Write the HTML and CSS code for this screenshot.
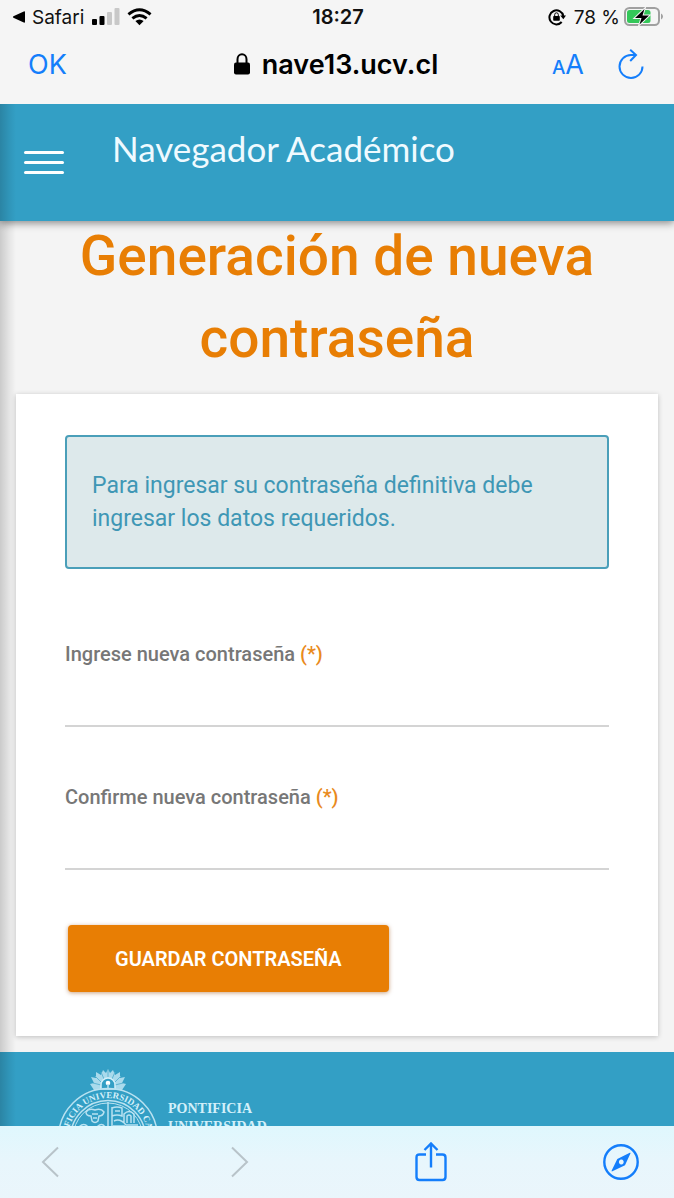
FILE: index.html
```html
<!DOCTYPE html>
<html lang="es">
<head>
<meta charset="utf-8">
<meta name="viewport" content="width=device-width, initial-scale=1">
<title>Navegador Académico</title>
<link rel="stylesheet" href="styles.css">
</head>
<body>
<div class="status">
  <div class="status-left">
    <svg class="back-icon" viewBox="0 0 14 14" aria-hidden="true"><path d="M13 2.200v9.600q0 1.200-1.200.7L1.400 7.700q-1-.7 0-1.400L11.800 1.500Q13 1 13 2.200z"/></svg>
    <span class="back-app">Safari</span>
    <svg class="signal-icon" viewBox="0 0 28 18" aria-hidden="true"><rect x="0" y="11" width="5" height="6" rx="1"/><rect x="7.500" y="8" width="5" height="9" rx="1"/><rect class="off" x="15" y="4" width="5" height="13" rx="1"/><rect class="off" x="22.500" y="0" width="5" height="17" rx="1"/></svg>
    <svg class="wifi-icon" viewBox="0 0 26 18" aria-hidden="true"><path class="arc" d="M1.500 6.300Q13-3.300 24.500 6.300M5.600 10.500Q13 4.300 20.400 10.500"/><path d="M8.700 13.200Q13 9.800 17.300 13.200L13 17.500z"/></svg>
  </div>
  <div class="clock">18:27</div>
  <div class="status-right">
    <svg class="rotation-icon" viewBox="0 0 18 18" aria-hidden="true"><path class="ring" d="M13.700 14A7 7 0 1 1 15.300 8"/><path d="M12.300 7.500h5.700l-2.700 3.800z"/><rect x="5.200" y="8" width="6.600" height="4.800" rx=".8"/><path class="shackle" d="M6.700 8V6.600a1.800 1.800 0 0 1 3.600 0V8"/></svg>
    <span class="percent">78 %</span>
    <svg class="battery-icon" viewBox="0 0 40 20" aria-hidden="true"><rect class="case" x="1" y="1" width="34" height="17" rx="4.500"/><path class="cap" d="M37 6.500q2 .8 2 3t-2 3z"/><rect class="charge" x="3" y="3" width="23.500" height="13" rx="2.500"/><path class="bolt" d="M20.500 2L11 11h6.500L15.500 17.500l9.500-9h-6.500z"/></svg>
  </div>
</div>
<nav class="browser-bar">
  <button class="ok" type="button">OK</button>
  <div class="address">
    <svg class="lock-icon" viewBox="0 0 16 22" aria-hidden="true"><rect x="0" y="9.500" width="16" height="12" rx="2"/><path d="M3.500 11V6.200a4.500 5 0 0 1 9 0V11"/></svg>
    <span>nave13.ucv.cl</span>
  </div>
  <div class="browser-tools">
    <button class="text-size" type="button" aria-label="Tamaño del texto"><span class="small-a">A</span>A</button>
    <button type="button" aria-label="Recargar"><svg class="reload-icon" viewBox="0 0 26 30" aria-hidden="true"><path d="M24.500 17.500A11.500 11.500 0 1 1 13 6h4.500M12.200.8L18 6l-5.800 6"/></svg></button>
  </div>
</nav>

<div class="page">
  <header class="header">
    <button class="menu" type="button" aria-label="Menú"><span></span><span></span><span></span></button>
    <div class="brand">Navegador Académico</div>
  </header>
  <main>
    <h1>Generación de nueva contraseña</h1>
    <form class="card">
      <p class="notice">Para ingresar su contraseña definitiva debe ingresar los datos requeridos.</p>
      <div class="field">
        <label for="new-password">Ingrese nueva contraseña <span class="required">(*)</span></label>
        <input id="new-password" type="password">
      </div>
      <div class="field">
        <label for="confirm-password">Confirme nueva contraseña <span class="required">(*)</span></label>
        <input id="confirm-password" type="password">
      </div>
      <button class="save" type="button">GUARDAR CONTRASEÑA</button>
    </form>
  </main>
  <footer class="footer">
    <svg class="seal" viewBox="0 0 104 124" aria-hidden="true">
      <defs><path id="seal-arc" d="M12 72A40 40 0 0 1 92 72"/></defs>
      <path class="rays" d="M38 24L34 18l4-1-3-6 5 1 0-6 5 3 2-5 3 3 2-4 2 4 3-3 2 5 5-3 0 6 5-1-3 6 4 1-4 6z"/>
      <path class="spokes" d="M52 4v7M45 6l3 7M59 6l-3 7M39 10l6 6M65 10l-6 6M37 17l8 2M67 17l-8 2"/>
      <path class="halo" d="M45 23v-4a7 7 0 0 1 14 0v4"/>
      <circle class="jewel" cx="52" cy="17" r="2.300"/><path class="stem" d="M52 18v4"/>
      <circle class="line" cx="52" cy="72" r="49.500"/>
      <circle class="line" cx="52" cy="72" r="37.500"/>
      <circle class="line thin" cx="52" cy="72" r="35"/>
      <text class="motto"><textPath href="#seal-arc" startOffset="53%" text-anchor="middle">FICIA UNIVERSIDAD CAT</textPath></text>
      <path class="line" d="M52 36v72M18 72h68"/>
      <path class="line" d="M30 46q3-4 9-2 6-2 9 2-1 4-5 4l-1 5q-3 3-6 0l-1-5q-5 0-5-4zM36 48h6M37 52h4M23 61q5-5 9 0t9 0 8 0"/>
      <path class="line" d="M56 41v20M56 42q5-2 10 0v8q-5-2-10 0M59 45h5M68 57v-9q5-5 10 0v9M71 57v-7q2-2 4 0v7M58 55q6-3 12 4h12M57 60h12"/>
    </svg>
    <div class="university">PONTIFICIA<br>UNIVERSIDAD</div>
  </footer>
  <div class="drawer-shadow"></div>
</div>

<nav class="toolbar">
  <button type="button" aria-label="Atrás"><svg class="chevron" viewBox="0 0 18 32" aria-hidden="true"><path d="M17 1.500L2 16l15 14.500"/></svg></button>
  <button type="button" aria-label="Adelante"><svg class="chevron" viewBox="0 0 18 32" aria-hidden="true"><path d="M1 1.500L16 16 1 30.500"/></svg></button>
  <button type="button" aria-label="Compartir"><svg class="share-icon" viewBox="0 0 32 40" aria-hidden="true"><path d="M11 12.500H4.500Q1.500 12.500 1.500 15.500V35q0 3 3 3h23q3 0 3-3V15.500q0-3-3-3H21M16 25.500V2M9.500 8L16 1.500 22.500 8"/></svg></button>
  <button type="button" aria-label="Abrir en Safari"><svg class="compass-icon" viewBox="0 0 36 36" aria-hidden="true"><circle class="dial" cx="18" cy="18" r="16.700"/><path fill-rule="evenodd" d="M26.800 8.800q1-.4.600.6L22 21.200 9.400 27.300q-1.200.4-.7-.7L14.300 15zM18.300 15.600a2.400 2.400 0 1 0 .01 0z"/></svg></button>
</nav>
</body>
</html>
```
FILE: styles.css
```css
* {
  box-sizing: border-box;
}

body {
  margin: 0;
  height: 100vh;
  display: flex;
  flex-direction: column;
  background: #f5f5f5;
  font-family: Roboto, "Liberation Sans", sans-serif;
}

button {
  padding: 0;
  border: 0;
  background: none;
  color: inherit;
  font: inherit;
  cursor: pointer;
}

svg {
  display: block;
}

.status,
.browser-bar {
  flex: none;
  display: grid;
  grid-template-columns: 1fr auto 1fr;
  align-items: center;
  font-family: Inter, "Liberation Sans", sans-serif;
}

.status {
  height: 34px;
  padding: 0 10px 0 12px;
  font-size: 19px;
  color: #111;
}

.status-left,
.status-right {
  display: flex;
  align-items: center;
}

.status-right {
  justify-content: flex-end;
}

.back-icon {
  width: 14px;
  height: 14px;
  margin-right: 6px;
}

.signal-icon {
  width: 28px;
  height: 18px;
  margin: 0 7px 0 8px;
}

.signal-icon .off {
  fill: #c8c8c8;
}

.wifi-icon {
  width: 25px;
  height: 18px;
}

.wifi-icon .arc {
  fill: none;
  stroke: #000;
  stroke-width: 3;
}

.clock {
  font-size: 20px;
  font-weight: 600;
}

.rotation-icon {
  width: 18px;
  height: 18px;
  margin-right: 8px;
}

.rotation-icon .ring,
.rotation-icon .shackle {
  fill: none;
  stroke: #000;
  stroke-width: 2;
}

.rotation-icon .shackle {
  stroke-width: 1;
}

.battery-icon {
  width: 40px;
  height: 20px;
  margin-left: 4px;
}

.battery-icon .case {
  fill: none;
  stroke: #a0a0a0;
  stroke-width: 2;
}

.battery-icon .cap {
  fill: #a0a0a0;
}

.battery-icon .charge {
  fill: #34c759;
}

.battery-icon .bolt {
  stroke: #f5f5f5;
  stroke-width: 2;
  paint-order: stroke;
}

.browser-bar {
  height: 70px;
  padding: 0 30px 10px 28px;
  font-size: 27px;
}

.ok {
  justify-self: start;
  color: #147efb;
}

.address {
  display: flex;
  align-items: center;
  gap: 12px;
  font-weight: 600;
}

.lock-icon {
  width: 16px;
  height: 22px;
}

.lock-icon path {
  fill: none;
  stroke: #000;
  stroke-width: 2;
}

.browser-tools {
  display: flex;
  justify-content: flex-end;
  align-items: center;
  gap: 34px;
  color: #147efb;
}

.small-a {
  font-size: 19px;
  font-weight: 500;
}

.reload-icon {
  width: 26px;
  height: 30px;
}

.reload-icon path {
  fill: none;
  stroke: #147efb;
  stroke-width: 2;
}

.page {
  flex: 1;
  min-height: 0;
  position: relative;
  overflow: hidden;
  background: #f4f4f4;
}

.drawer-shadow {
  position: absolute;
  inset: 0 auto 0 0;
  z-index: 2;
  width: 16px;
  background: linear-gradient(to right, rgba(0, 0, 0, 0.17), rgba(0, 0, 0, 0.06) 60%, transparent);
  pointer-events: none;
}

.header {
  position: relative;
  z-index: 1;
  display: flex;
  align-items: center;
  gap: 48px;
  height: 117px;
  padding: 0 24px;
  background: #339fc5;
  box-shadow: 0 2px 8px rgba(0, 0, 0, 0.45);
  color: #fff;
}

.menu {
  display: grid;
  gap: 7px;
  width: 40px;
}

.menu span {
  height: 3px;
  border-radius: 2px;
  background: #fff;
}

.brand {
  padding-bottom: 30px;
  color: #effaff;
  font-family: Lato, sans-serif;
  font-size: 35px;
  line-height: 40px;
}

h1 {
  margin: -6px 32px 15px;
  color: #e87e04;
  font-size: 55px;
  font-weight: 500;
  line-height: 82px;
  text-align: center;
}

.card {
  margin: 0 16px 16px;
  padding: 41px 49px 44px;
  background: #fff;
  box-shadow: 0 1px 5px rgba(0, 0, 0, 0.22);
}

.notice {
  margin: 0 0 73px;
  padding: 32px 25px;
  border: 2px solid #4a9fb9;
  border-radius: 4px;
  background: #dde9eb;
  color: #3f97b5;
  font-size: 23px;
  line-height: 33px;
}

.field + .field {
  margin-top: 58px;
}

.field label {
  display: block;
  color: #777;
  font-size: 20px;
  font-weight: 500;
  line-height: 24px;
}

.field .required {
  color: #e98a1c;
}

.field input {
  display: block;
  width: 100%;
  height: 61px;
  padding: 16px 0 0;
  border: 0;
  border-bottom: 2px solid #d4d4d4;
  background: none;
  font: 20px Roboto, sans-serif;
  outline: 0;
}

.save {
  display: block;
  height: 67px;
  margin: 55px 0 0 3px;
  padding: 0 47px;
  border-radius: 4px;
  background: #e87e04;
  box-shadow: 0 1px 4px rgba(150, 70, 0, 0.5);
  color: #fff;
  font-size: 20px;
  font-weight: 600;
}

.footer {
  display: flex;
  gap: 8px;
  padding: 14px 56px 24px;
  background: #339fc5;
  color: #d3f0fa;
}

.seal {
  width: 104px;
  height: 124px;
}

.seal .rays {
  fill: #a9daec;
}

.seal .spokes {
  fill: none;
  stroke: #5fb5d3;
  stroke-width: 1;
}

.seal .halo {
  fill: #339fc5;
  stroke: #d3f0fa;
  stroke-width: 1.5;
}

.seal .jewel {
  fill: #fff;
}

.seal .stem,
.seal .line {
  fill: none;
  stroke: #b9e2f1;
  stroke-width: 1.5;
}

.seal .thin {
  stroke-width: 1;
}

.motto {
  fill: #d3f0fa;
  font: bold 9px "Liberation Serif", serif;
}

.university {
  padding-top: 34px;
  font-family: "Liberation Serif", serif;
  font-size: 14px;
  font-weight: 700;
  line-height: 18px;
}

.toolbar {
  flex: none;
  display: flex;
  justify-content: space-between;
  align-items: center;
  height: 72px;
  padding: 0 35px 0 32px;
  background: linear-gradient(#dff7fd, #e8f6fc 50%, #eaf5fb);
}

.toolbar button {
  display: grid;
  place-items: center;
  width: 36px;
}

.chevron {
  width: 18px;
  height: 32px;
}

.chevron path {
  fill: none;
  stroke: #b8c3c9;
  stroke-width: 2;
}

.share-icon {
  width: 32px;
  height: 40px;
}

.share-icon path,
.compass-icon .dial {
  fill: none;
  stroke: #147efb;
  stroke-width: 2.4;
}

.compass-icon {
  width: 36px;
  height: 36px;
}

.compass-icon path {
  fill: #147efb;
}
```
